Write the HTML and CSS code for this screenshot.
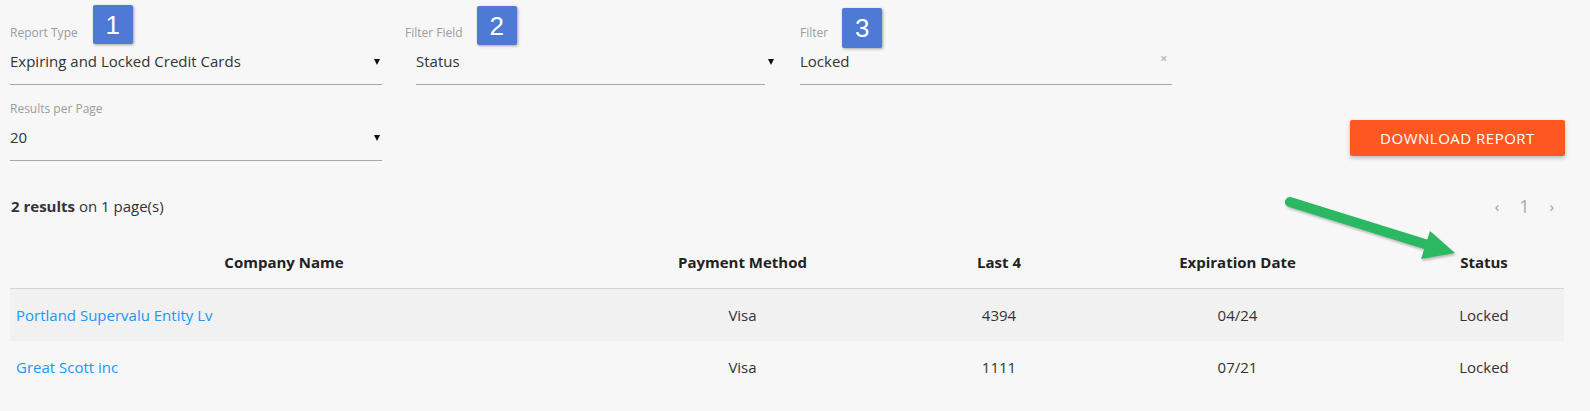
FILE: index.html
```html
<!DOCTYPE html>
<html lang="en">
<head>
<meta charset="utf-8">
<title>Expiring and Locked Credit Cards</title>
<link rel="stylesheet" href="styles.css">
</head>
<body>
<div class="page">
  <div class="filters">
    <div class="filter-row">
      <div class="field">
        <div class="field-label"><span class="label-text">Report Type<span class="badge badge-1">1</span></span></div>
        <div class="control"><span class="value">Expiring and Locked Credit Cards</span><span class="caret"></span></div>
      </div>
      <div class="field field-inset">
        <div class="field-label"><span class="label-text">Filter Field<span class="badge badge-2">2</span></span></div>
        <div class="control"><span class="value">Status</span><span class="caret caret-out"></span></div>
      </div>
      <div class="field">
        <div class="field-label"><span class="label-text">Filter<span class="badge badge-3">3</span></span></div>
        <div class="control"><span class="value">Locked</span><span class="clear">×</span></div>
      </div>
    </div>
    <div class="filter-row row-second">
      <div class="field">
        <div class="field-label"><span class="label-text">Results per Page</span></div>
        <div class="control"><span class="value">20</span><span class="caret"></span></div>
      </div>
      <button class="download" type="button">Download Report</button>
    </div>
  </div>

  <div class="results-bar">
    <div class="results-count"><b>2 results</b> on 1 page(s)</div>
    <div class="pager"><span class="pager-arrow">‹</span><span class="pager-num">1</span><span class="pager-arrow">›</span></div>
  </div>

  <table class="report">
    <colgroup>
      <col class="c-company"><col class="c-method"><col class="c-last"><col class="c-exp"><col class="c-status">
    </colgroup>
    <thead>
      <tr><th>Company Name</th><th>Payment Method</th><th>Last 4</th><th>Expiration Date</th><th>Status</th></tr>
    </thead>
    <tbody>
      <tr class="row-alt"><td class="company"><a href="#">Portland Supervalu Entity Lv</a></td><td>Visa</td><td>4394</td><td>04/24</td><td>Locked</td></tr>
      <tr><td class="company"><a href="#">Great Scott inc</a></td><td>Visa</td><td>1111</td><td>07/21</td><td>Locked</td></tr>
    </tbody>
  </table>

  <svg class="annot-arrow" width="1590" height="411" viewBox="0 0 1590 411" aria-hidden="true">
    <line x1="1290" y1="202" x2="1428" y2="245" stroke="#2bb863" stroke-width="10" stroke-linecap="round"/>
    <polygon points="1455,253 1430,231 1421,259" fill="#2bb863"/>
  </svg>
</div>
</body>
</html>
```

FILE: styles.css
```css
html, body {
  margin: 0;
  padding: 0;
  background: #f7f7f7;
}

body {
  font-family: "Open Sans", "Liberation Sans", sans-serif;
  font-size: 15px;
  color: #333;
}

.page {
  position: relative;
  width: 1590px;
  height: 411px;
  box-sizing: border-box;
  padding: 0 26px 0 10px;
  overflow: hidden;
}

.filter-row {
  display: flex;
  gap: 23px;
  padding-top: 25px;
}

.row-second {
  padding-top: 16px;
  justify-content: space-between;
  align-items: flex-start;
}

.field {
  width: 372px;
}

.field-label {
  height: 16px;
  line-height: 16px;
  font-size: 12px;
  color: #9c9c9c;
}

.label-text {
  position: relative;
  display: inline-block;
}

.control {
  margin-top: 9px;
  display: flex;
  align-items: center;
  justify-content: space-between;
  height: 22px;
  line-height: 22px;
  padding-bottom: 12px;
  border-bottom: 1px solid #a8a8a8;
}

.field-inset .control {
  margin-left: 11px;
  margin-right: 12px;
}

.value {
  font-size: 15px;
  color: #333;
}

.caret {
  width: 0;
  height: 0;
  border-left: 3.5px solid transparent;
  border-right: 3.5px solid transparent;
  border-top: 6px solid #111;
  margin-right: 2px;
  margin-top: 1px;
}

.caret-out {
  margin-right: -9px;
}

.clear {
  font-size: 12px;
  line-height: 12px;
  color: #8fa1b3;
  margin-right: 5px;
  margin-top: -4px;
}

.badge {
  position: absolute;
  left: calc(100% + 15px);
  top: -20px;
  width: 40px;
  height: 39px;
  display: flex;
  align-items: center;
  justify-content: center;
  background: #4e79d5;
  color: #fff;
  font-family: "Liberation Sans", Arial, sans-serif;
  font-size: 26px;
  line-height: 1;
  border-radius: 2px;
  box-shadow: 1px 1px 3px rgba(0, 0, 0, 0.35);
}

.badge-2 { top: -19px; left: calc(100% + 14px); }
.badge-3 { top: -17px; left: calc(100% + 14px); height: 40px; }

.download {
  margin-top: 19px;
  margin-right: -1px;
  width: 215px;
  height: 36px;
  border: none;
  border-radius: 2px;
  background: #ff5722;
  color: #fff;
  font-family: "Open Sans", "Liberation Sans", sans-serif;
  font-size: 15px;
  letter-spacing: 0.5px;
  text-transform: uppercase;
  box-shadow: 0 2px 4px rgba(0, 0, 0, 0.25);
  padding: 0;
}

.results-bar {
  margin-top: 35px;
  display: flex;
  justify-content: space-between;
  align-items: center;
  height: 20px;
  line-height: 20px;
}

.results-count {
  padding-left: 1px;
  color: #333;
}

.results-count b {
  font-weight: 700;
}

.pager {
  display: flex;
  align-items: center;
  padding-right: 10px;
  color: #9e9e9e;
}

.pager-arrow {
  font-size: 15px;
}

.pager-num {
  font-size: 18px;
  margin: 0 20px;
  color: #a3acb6;
}

.report {
  margin-top: 21px;
  width: 1554px;
  table-layout: fixed;
  border-collapse: separate;
  border-spacing: 0;
}

.c-company { width: 548px; }
.c-method { width: 369px; }
.c-last { width: 144px; }
.c-exp { width: 333px; }
.c-status { width: 160px; }

.report th {
  padding: 15px 6px;
  line-height: 21px;
  font-weight: 700;
  color: #222;
  text-align: center;
  border-bottom: 1px solid #d4d4d4;
}

.report td {
  padding: 16px 6px;
  line-height: 20px;
  text-align: center;
  color: #333;
}

.report td.company {
  text-align: left;
}

.report a {
  color: #2196f3;
  text-decoration: none;
}

.row-alt td {
  background: #f1f1f1;
}

.annot-arrow {
  position: absolute;
  left: 0;
  top: 0;
  pointer-events: none;
  filter: drop-shadow(1px 2px 1px rgba(0, 0, 0, 0.25));
}
```
